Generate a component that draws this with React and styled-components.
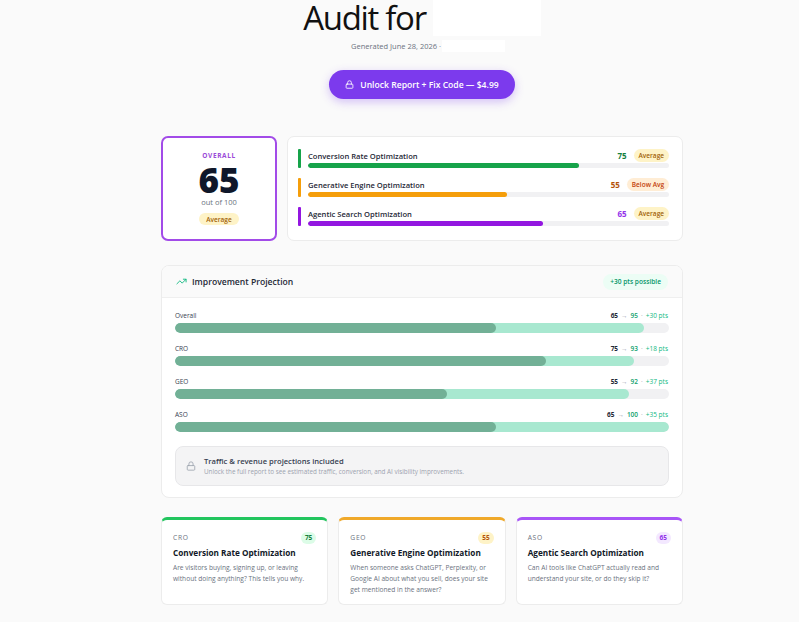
import React from "react";
import styled, { createGlobalStyle } from "styled-components";
import { Lock, TrendingUp } from "lucide-react";

const Global = createGlobalStyle`
  html, body { margin: 0; padding: 0; background: #fafafa; }
  body { font-family: "Open Sans", "Noto Sans", sans-serif; color: #1f2937; }
  * { box-sizing: border-box; }
`;

const Page = styled.div`
  display: flex;
  justify-content: center;
  padding-left: 45px;
  min-height: 622px;
`;

const Main = styled.main`
  width: 522px;
  display: flex;
  flex-direction: column;
`;

const Header = styled.header`
  display: flex;
  flex-direction: column;
  align-items: center;
`;

const TitleRow = styled.div`
  display: flex;
  align-items: flex-start;
  gap: 7px;
  height: 38px;
`;

const Title = styled.h1`
  margin: 0;
  font-weight: 400;
  font-size: 33px;
  line-height: 36px;
  letter-spacing: -1.3px;
  color: #111;
`;

const Redact = styled.span`
  display: inline-block;
  background: #fff;
  width: ${(p) => p.$w}px;
  height: ${(p) => p.$h}px;
`;

const SubRow = styled.div`
  display: flex;
  align-items: center;
  margin-top: 2px;
  height: 12px;
  padding-left: 12px;
`;

const Sub = styled.span`
  font-size: 7.5px;
  color: #6b7280;
  margin-right: 1px;
`;

const UnlockButton = styled.button`
  margin-top: 18px;
  height: 29px;
  width: 186px;
  border: none;
  border-radius: 999px;
  background: #7c3aed;
  color: #fff;
  font-family: inherit;
  font-weight: 600;
  font-size: 8.6px;
  display: flex;
  align-items: center;
  justify-content: center;
  gap: 6px;
  box-shadow: 0 3px 10px rgba(124, 58, 237, 0.3);
`;

const ScoreSection = styled.section`
  margin-top: 37px;
  display: flex;
  gap: 10px;
  height: 105px;
`;

const OverallCard = styled.div`
  width: 116px;
  background: #fff;
  border: 2px solid #a24be8;
  border-radius: 7px;
  display: flex;
  flex-direction: column;
  align-items: center;
  padding-top: 13px;
`;

const OverallLabel = styled.div`
  font-size: 6.5px;
  font-weight: 700;
  letter-spacing: 0.6px;
  color: #9b4ad8;
  line-height: 10px;
`;

const BigScore = styled.div`
  font-size: 35px;
  font-weight: 800;
  line-height: 36px;
  color: #0f172a;
  margin-top: 1px;
`;

const OutOf = styled.div`
  font-size: 7.5px;
  color: #6b7280;
  line-height: 11px;
  margin-top: -1px;
`;

const Pill = styled.span`
  display: inline-flex;
  align-items: center;
  justify-content: center;
  height: ${(p) => p.$h || 13}px;
  padding: 0 ${(p) => p.$px || 6}px;
  border-radius: 999px;
  background: ${(p) => p.$bg};
  color: ${(p) => p.$fg};
  font-size: ${(p) => p.$fs || 6.5}px;
  font-weight: ${(p) => p.$fw || 600};
  white-space: nowrap;
`;

const OverallPill = styled(Pill)`
  margin-top: 5px;
`;

const CatCard = styled.div`
  flex: 1;
  background: #fff;
  border: 1px solid #ececec;
  border-radius: 7px;
  padding: 12px 13px 0 10px;
  display: flex;
  flex-direction: column;
  gap: 10px;
`;

const CatRow = styled.div`
  display: flex;
  gap: 7px;
  height: 19px;
`;

const CatStripe = styled.div`
  width: 3px;
  border-radius: 1px;
  background: ${(p) => p.$c};
`;

const CatBody = styled.div`
  flex: 1;
  display: flex;
  flex-direction: column;
  justify-content: space-between;
`;

const CatTop = styled.div`
  display: flex;
  align-items: center;
  height: 13px;
  gap: 7px;
`;

const CatLabel = styled.span`
  flex: 1;
  font-size: 7.6px;
  font-weight: 600;
  color: #1f2937;
`;

const CatScore = styled.span`
  font-size: 8px;
  font-weight: 700;
  color: ${(p) => p.$c};
`;

const Track = styled.div`
  height: ${(p) => p.$h}px;
  border-radius: 999px;
  background: #f1f1f3;
  position: relative;
  overflow: hidden;
`;

const Fill = styled.div`
  position: absolute;
  left: 0;
  top: 0;
  bottom: 0;
  border-radius: 999px;
  background: ${(p) => p.$c};
`;

const ProjCard = styled.section`
  margin-top: 24px;
  background: #fff;
  border: 1px solid #ececec;
  border-radius: 8px;
  overflow: hidden;
`;

const ProjHeader = styled.div`
  height: 32px;
  background: #fafafa;
  border-bottom: 1px solid #efefef;
  display: flex;
  align-items: center;
  padding: 0 14px 0 14px;
  gap: 5px;
`;

const ProjTitle = styled.span`
  flex: 1;
  font-size: 8.6px;
  font-weight: 600;
  color: #1f2937;
`;

const ProjBody = styled.div`
  padding: 12px 13px 11px 13px;
  display: flex;
  flex-direction: column;
`;

const ProjRow = styled.div`
  display: flex;
  flex-direction: column;
  gap: 3px;
  margin-bottom: 10px;
`;

const ProjTop = styled.div`
  display: flex;
  justify-content: space-between;
  align-items: center;
  height: 10px;
  font-size: 6.5px;
  padding-right: 1px;
`;

const ProjLabel = styled.span`
  color: #374151;
`;

const ProjNums = styled.span`
  display: flex;
  gap: 3px;
  align-items: center;
`;

const NumFrom = styled.b`
  font-weight: 700;
  color: #1f2937;
`;

const Arrow = styled.span`
  color: #9ca3af;
`;

const NumTo = styled.b`
  font-weight: 600;
  color: #0f9f6e;
`;

const Gain = styled.span`
  color: #10b981;
`;

const LockedBox = styled.div`
  margin-top: 4px;
  height: 40px;
  background: #f4f4f5;
  border: 1px solid #e7e7e9;
  border-radius: 8px;
  display: flex;
  align-items: center;
  padding: 0 10px;
  gap: 8px;
`;

const LockedText = styled.div`
  display: flex;
  flex-direction: column;
  gap: 1px;
`;

const LockedTitle = styled.span`
  font-size: 7.6px;
  font-weight: 600;
  color: #374151;
`;

const LockedSub = styled.span`
  font-size: 6.3px;
  color: #9ca3af;
`;

const Cards = styled.section`
  margin-top: 19px;
  display: grid;
  grid-template-columns: repeat(3, 1fr);
  gap: 10px;
`;

const InfoCard = styled.div`
  height: 88px;
  background: #fff;
  border: 1px solid #ececec;
  border-top: 3px solid ${(p) => p.$c};
  border-radius: 6px;
  padding: 11px 11px 0 11px;
`;

const InfoTop = styled.div`
  display: flex;
  justify-content: space-between;
  align-items: center;
  height: 13px;
`;

const InfoTag = styled.span`
  font-size: 6.7px;
  letter-spacing: 0.7px;
  color: #6b7280;
  font-weight: 500;
`;

const InfoTitle = styled.div`
  margin-top: 2px;
  font-size: 8.2px;
  font-weight: 700;
  color: #111827;
  line-height: 13px;
`;

const InfoDesc = styled.p`
  margin: 3px 0 0;
  font-size: 6.6px;
  line-height: 11px;
  color: #6b7280;
`;

const cats = [
  { label: "Conversion Rate Optimization", score: 75, c: "#16a34a", sc: "#15803d", pill: "Average", pbg: "#fef3c7", pfg: "#a16207" },
  { label: "Generative Engine Optimization", score: 55, c: "#f59e0b", sc: "#b45309", pill: "Below Avg", pbg: "#ffedd5", pfg: "#c2410c" },
  { label: "Agentic Search Optimization", score: 65, c: "#9316e0", sc: "#9333ea", pill: "Average", pbg: "#fef3c7", pfg: "#a16207" },
];

const proj = [
  { label: "Overall", from: 65, to: 95, gain: 30 },
  { label: "CRO", from: 75, to: 93, gain: 18 },
  { label: "GEO", from: 55, to: 92, gain: 37 },
  { label: "ASO", from: 65, to: 100, gain: 35 },
];

const infos = [
  { tag: "CRO", score: 75, c: "#22c55e", bg: "#dcfce7", fg: "#15803d", title: "Conversion Rate Optimization", desc: "Are visitors buying, signing up, or leaving without doing anything? This tells you why." },
  { tag: "GEO", score: 55, c: "#f0a92a", bg: "#fef3c7", fg: "#b45309", title: "Generative Engine Optimization", desc: "When someone asks ChatGPT, Perplexity, or Google AI about what you sell, does your site get mentioned in the answer?" },
  { tag: "ASO", score: 65, c: "#a855f7", bg: "#f3e8ff", fg: "#9333ea", title: "Agentic Search Optimization", desc: "Can AI tools like ChatGPT actually read and understand your site, or do they skip it?" },
];

export default function App() {
  return (
    <>
      <Global />
      <Page>
        <Main>
          <Header>
            <TitleRow>
              <Title>Audit for</Title>
              <Redact $w={108} $h={36} />
            </TitleRow>
            <SubRow>
              <Sub>Generated June 28, 2026 ·</Sub>
              <Redact $w={63} $h={12} />
            </SubRow>
            <UnlockButton>
              <Lock size={9} strokeWidth={2.2} />
              Unlock Report + Fix Code — $4.99
            </UnlockButton>
          </Header>

          <ScoreSection>
            <OverallCard>
              <OverallLabel>OVERALL</OverallLabel>
              <BigScore>65</BigScore>
              <OutOf>out of 100</OutOf>
              <OverallPill $bg="#fef3c7" $fg="#a16207" $h={12} $px={7}>Average</OverallPill>
            </OverallCard>
            <CatCard>
              {cats.map((c) => (
                <CatRow key={c.label}>
                  <CatStripe $c={c.c} />
                  <CatBody>
                    <CatTop>
                      <CatLabel>{c.label}</CatLabel>
                      <CatScore $c={c.sc}>{c.score}</CatScore>
                      <Pill $bg={c.pbg} $fg={c.pfg} $h={13} $px={5}>{c.pill}</Pill>
                    </CatTop>
                    <Track $h={5}>
                      <Fill $c={c.c} style={{ width: `${c.score}%` }} />
                    </Track>
                  </CatBody>
                </CatRow>
              ))}
            </CatCard>
          </ScoreSection>

          <ProjCard>
            <ProjHeader>
              <TrendingUp size={11} color="#10b981" strokeWidth={2} />
              <ProjTitle>Improvement Projection</ProjTitle>
              <Pill $bg="#ecfdf5" $fg="#059669" $h={16} $px={7} $fs={6.6} $fw={600}>+30 pts possible</Pill>
            </ProjHeader>
            <ProjBody>
              {proj.map((p) => (
                <ProjRow key={p.label}>
                  <ProjTop>
                    <ProjLabel>{p.label}</ProjLabel>
                    <ProjNums>
                      <NumFrom>{p.from}</NumFrom>
                      <Arrow>→</Arrow>
                      <NumTo>{p.to}</NumTo>
                      <Arrow>·</Arrow>
                      <Gain>+{p.gain} pts</Gain>
                    </ProjNums>
                  </ProjTop>
                  <Track $h={10}>
                    <Fill $c="#a8e8d0" style={{ width: `${p.to}%` }} />
                    <Fill $c="#72b096" style={{ width: `${p.from}%` }} />
                  </Track>
                </ProjRow>
              ))}
              <LockedBox>
                <Lock size={10} color="#9ca3af" strokeWidth={2} />
                <LockedText>
                  <LockedTitle>Traffic &amp; revenue projections included</LockedTitle>
                  <LockedSub>Unlock the full report to see estimated traffic, conversion, and AI visibility improvements.</LockedSub>
                </LockedText>
              </LockedBox>
            </ProjBody>
          </ProjCard>

          <Cards>
            {infos.map((i) => (
              <InfoCard key={i.tag} $c={i.c}>
                <InfoTop>
                  <InfoTag>{i.tag}</InfoTag>
                  <Pill $bg={i.bg} $fg={i.fg} $h={12} $px={4} $fs={6.5} $fw={700}>{i.score}</Pill>
                </InfoTop>
                <InfoTitle>{i.title}</InfoTitle>
                <InfoDesc>{i.desc}</InfoDesc>
              </InfoCard>
            ))}
          </Cards>
        </Main>
      </Page>
    </>
  );
}
